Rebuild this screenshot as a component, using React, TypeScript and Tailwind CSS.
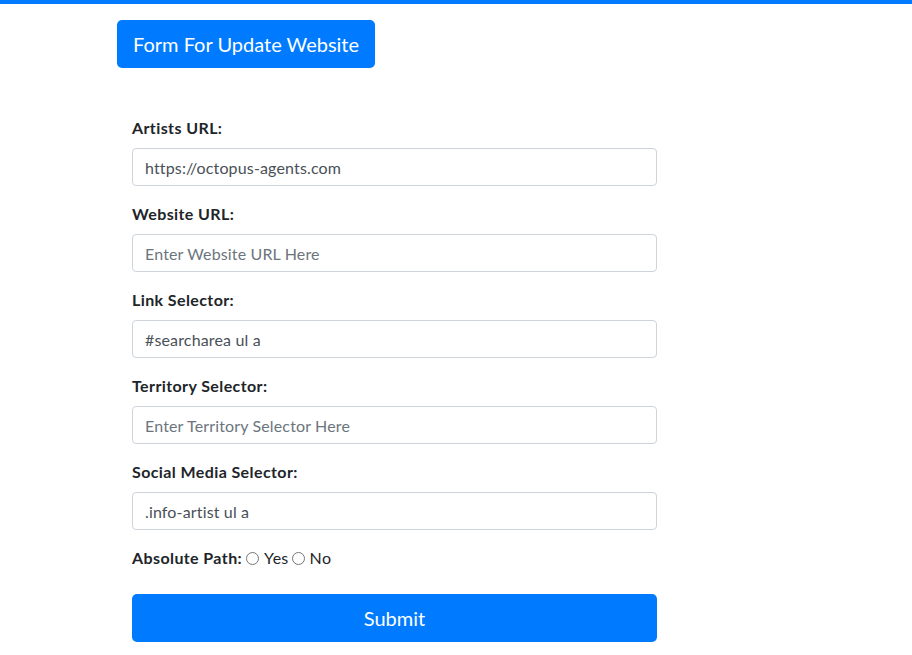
import React, { useState } from 'react';

const fields = [
  { label: 'Artists URL:', value: 'https://octopus-agents.com', placeholder: 'Enter Artists URL Here' },
  { label: 'Website URL:', value: '', placeholder: 'Enter Website URL Here' },
  { label: 'Link Selector:', value: '#searcharea ul a', placeholder: 'Enter Link Selector Here' },
  { label: 'Territory Selector:', value: '', placeholder: 'Enter Territory Selector Here' },
  { label: 'Social Media Selector:', value: '.info-artist ul a', placeholder: 'Enter Social Media Selector Here' },
];

export default function App() {
  const [values, setValues] = useState(fields.map((f) => f.value));

  return (
    <div
      className="min-h-screen bg-white border-t-4 border-[#007bff] text-[#212529]"
      style={{ fontFamily: '"Segoe UI", Lato, "Liberation Sans", sans-serif' }}
    >
      <div className="pl-[117px] pt-4">
        {/* Header */}
        <button className="h-12 px-4 bg-[#007bff] text-white text-[20px] leading-[30px] rounded-[5px]">
          Form For Update Website
        </button>

        {/* Form */}
        <form className="mt-12 ml-[15px] w-[525px]" onSubmit={(e) => e.preventDefault()}>
          {fields.map((f, i) => (
            <div key={f.label} className="mb-4">
              <label className="block mb-2 font-bold text-base leading-6 tracking-[0.4px]">{f.label}</label>
              <input
                type="text"
                value={values[i]}
                placeholder={f.placeholder}
                onChange={(e) => {
                  const next = [...values];
                  next[i] = e.target.value;
                  setValues(next);
                }}
                className="block w-full h-[38px] px-3 border border-[#ced4da] rounded-[4px] text-base tracking-[0.15px] text-[#495057] placeholder:text-[#6c757d] outline-none"
              />
            </div>
          ))}

          <div className="flex items-center text-base leading-6">
            <span className="font-bold tracking-[0.4px]">Absolute Path:</span>
            <input type="radio" name="abs" className="w-[13px] h-[13px] ml-1 mr-[5px]" />
            <span className="tracking-[0.3px]">Yes</span>
            <input type="radio" name="abs" className="w-[13px] h-[13px] ml-[3px] mr-[5px]" />
            <span className="tracking-[0.3px]">No</span>
          </div>

          <button
            type="submit"
            className="mt-6 w-full h-12 bg-[#007bff] text-white text-[20px] leading-[30px] rounded-[5px]"
          >
            Submit
          </button>
        </form>
      </div>
    </div>
  );
}
